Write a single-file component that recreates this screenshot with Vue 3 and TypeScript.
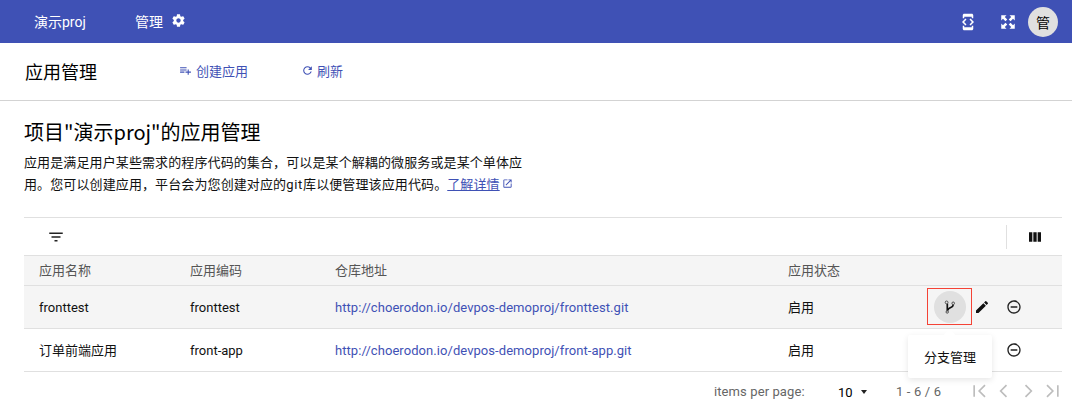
<script setup lang="ts">
interface Row { name: string; code: string; repo: string; status: string; latinName: boolean }
const rows: Row[] = [
  { name: 'fronttest', code: 'fronttest', repo: 'http://choerodon.io/devpos-demoproj/fronttest.git', status: '启用', latinName: true },
  { name: '订单前端应用', code: 'front-app', repo: 'http://choerodon.io/devpos-demoproj/front-app.git', status: '启用', latinName: false },
]
</script>

<template>
  <div class="page">
    <header class="topbar">
      <div class="top-left">
        <span class="proj">演示proj</span>
        <span class="manage">管理</span>
        <svg class="gear" viewBox="0 0 24 24" width="15" height="15"><path fill="#fff" d="M19.43 12.98c.04-.32.07-.64.07-.98s-.03-.66-.07-.98l2.11-1.65c.19-.15.24-.42.12-.64l-2-3.46c-.12-.22-.39-.3-.61-.22l-2.49 1c-.52-.4-1.08-.73-1.69-.98l-.38-2.65A.49.49 0 0 0 14 2h-4c-.25 0-.46.18-.49.42l-.38 2.65c-.61.25-1.17.59-1.69.98l-2.49-1c-.23-.09-.49 0-.61.22l-2 3.46c-.13.22-.07.49.12.64l2.11 1.65c-.04.32-.07.65-.07.98s.03.66.07.98l-2.11 1.65c-.19.15-.24.42-.12.64l2 3.46c.12.22.39.3.61.22l2.49-1c.52.4 1.08.73 1.69.98l.38 2.65c.03.24.24.42.49.42h4c.25 0 .46-.18.49-.42l.38-2.65c.61-.25 1.17-.59 1.69-.98l2.49 1c.23.09.49 0 .61-.22l2-3.46c.12-.22.07-.49-.12-.64l-2.11-1.65zM12 15.5c-1.93 0-3.5-1.57-3.5-3.5s1.57-3.5 3.5-3.5 3.5 1.57 3.5 3.5-1.57 3.5-3.5 3.5z"/></svg>
      </div>
      <div class="top-right">
        <svg viewBox="0 0 24 24" width="18" height="18"><path fill="#fff" d="M7 5h10v2h2V3c0-1.100-.9-1.990-2-1.990L7 1c-1.100 0-2 .9-2 2v4h2V5zm8.410 11.590L20 12l-4.590-4.590L14 8.830 17.170 12 14 15.170l1.410 1.420zM10 15.170L6.830 12 10 8.830 8.590 7.410 4 12l4.590 4.590L10 15.170zM17 19H7v-2H5v4c0 1.100.9 2 2 2h10c1.100 0 2-.9 2-2v-4h-2v2z"/></svg>
        <svg viewBox="0 0 24 24" width="18" height="18"><path fill="#fff" d="M3 3h7L7.700 5.300l3.300 3.300-2.400 2.400-3.300-3.300L3 10zM21 3v7l-2.300-2.300-3.300 3.300-2.400-2.400 3.300-3.300L14 3zM3 21v-7l2.300 2.300 3.300-3.300 2.400 2.400-3.300 3.300L10 21zM21 21h-7l2.300-2.300-3.300-3.300 2.400-2.400 3.300 3.300L21 14z"/></svg>
        <span class="avatar">管</span>
      </div>
    </header>

    <div class="subbar">
      <h1 class="sub-title">应用管理</h1>
      <button class="link-btn first">
        <svg viewBox="0 0 24 24" width="13" height="13"><path fill="#3f51b5" d="M14 10H2v2h12v-2zm0-4H2v2h12V6zm4 8v-4h-2v4h-4v2h4v4h2v-4h4v-2h-4zM2 16h8v-2H2v2z"/></svg>
        创建应用
      </button>
      <button class="link-btn">
        <svg viewBox="0 0 24 24" width="13" height="13"><path fill="#3f51b5" d="M17.650 6.350A7.958 7.958 0 0 0 12 4c-4.420 0-7.990 3.580-7.990 8s3.570 8 7.990 8c3.730 0 6.840-2.550 7.730-6h-2.080A5.990 5.990 0 0 1 12 18c-3.310 0-6-2.690-6-6s2.690-6 6-6c1.660 0 3.140.69 4.220 1.780L13 11h7V4l-2.350 2.350z"/></svg>
        刷新
      </button>
    </div>

    <main class="content">
      <h2 class="heading">项目"演示proj"的应用管理</h2>
      <p class="desc">应用是满足用户某些需求的程序代码的集合，可以是某个解耦的微服务或是某个单体应用。您可以创建应用，平台会为您创建对应的<span class="git">git</span>库以便管理该应用代码。<a class="more">了解详情</a><svg class="ext" viewBox="0 0 24 24" width="11" height="11"><path fill="#3f51b5" d="M19 19H5V5h7V3H5a2 2 0 0 0-2 2v14a2 2 0 0 0 2 2h14c1.100 0 2-.9 2-2v-7h-2v7zM14 3v2h3.590l-9.830 9.830 1.410 1.410L19 6.410V10h2V3h-7z"/></svg></p>

      <section class="table">
        <div class="tools">
          <svg class="filter" viewBox="0 0 24 24" width="18" height="18"><path fill="#222" d="M10 18h4v-2h-4v2zM3 6v2h18V6H3zm3 7h12v-2H6v2z"/></svg>
          <span class="tools-right">
            <svg viewBox="0 0 24 24" width="16" height="16"><path fill="#111" d="M3 5h5v14H3zM9.500 5h5v14h-5zM16 5h5v14h-5z"/></svg>
          </span>
        </div>
        <div class="tr thead">
          <span>应用名称</span><span>应用编码</span><span>仓库地址</span><span>应用状态</span><span></span>
        </div>
        <div v-for="(r, i) in rows" :key="r.repo" class="tr" :class="{ hovered: i === 0 }">
          <span :class="{ latin: r.latinName }">{{ r.name }}</span>
          <span class="latin">{{ r.code }}</span>
          <a class="repo latin">{{ r.repo }}</a>
          <span>{{ r.status }}</span>
          <span class="actions">
            <span class="slot">
              <span v-if="i === 0" class="branch-box">
                <span class="branch-btn">
                  <svg viewBox="0 0 14 14" width="14" height="14">
                    <path d="M4.300 3.500V11.500M10 4.500V5.500C10 7.800 4.800 7.200 4.800 10.500" fill="none" stroke="#111" stroke-width="1.700"/>
                    <circle cx="3.600" cy="2.400" r="1.400" fill="#e0e0e0" stroke="#444" stroke-width=".9"/>
                    <circle cx="4.200" cy="12" r="1.200" fill="#e0e0e0" stroke="#444" stroke-width=".9"/>
                    <circle cx="10.200" cy="3.300" r="1.300" fill="#e0e0e0" stroke="#444" stroke-width=".9"/>
                  </svg>
                </span>
              </span>
            </span>
            <span class="slot small">
              <svg v-if="i === 0" viewBox="0 0 24 24" width="16" height="16"><path fill="#111" d="M3 17.250V21h3.750L17.810 9.940l-3.750-3.750L3 17.250zM20.710 7.040a1 1 0 0 0 0-1.410l-2.340-2.340a1 1 0 0 0-1.410 0l-1.830 1.830 3.750 3.750 1.830-1.830z"/></svg>
            </span>
            <span class="slot small">
              <svg viewBox="0 0 24 24" width="16" height="16"><path fill="#222" d="M7 11v2h10v-2H7zm5-9C6.480 2 2 6.480 2 12s4.480 10 10 10 10-4.480 10-10S17.520 2 12 2zm0 18c-4.410 0-8-3.590-8-8s3.590-8 8-8 8 3.590 8 8-3.590 8-8 8z"/></svg>
            </span>
            <span v-if="i === 0" class="tooltip">分支管理</span>
          </span>
        </div>
        <footer class="pager">
          <span class="per">items per page:</span>
          <span class="size">10<i class="caret"></i></span>
          <span class="range">1 - 6 / 6</span>
          <span class="nav">
            <svg viewBox="0 0 24 24" width="20" height="20"><path d="M5 5v14M18 5l-7 7 7 7" /></svg>
            <svg viewBox="0 0 24 24" width="20" height="20"><path d="M15 5l-7 7 7 7" /></svg>
            <svg viewBox="0 0 24 24" width="20" height="20"><path d="M9 5l7 7-7 7" /></svg>
            <svg viewBox="0 0 24 24" width="20" height="20"><path d="M6 5l7 7-7 7M19 5v14" /></svg>
          </span>
        </footer>
      </section>
    </main>
  </div>
</template>

<style scoped>
.page {
  width: 1072px;
  height: 410px;
  overflow: hidden;
  background: #fff;
  color: #000;
  font-family: Roboto, "Noto Sans CJK SC", sans-serif;
  font-size: 13px;
}
.topbar {
  height: 43px;
  background: #3f51b5;
  display: flex;
  align-items: center;
  justify-content: space-between;
  color: #fff;
}
.top-left { display: flex; align-items: center; padding-left: 34px; padding-bottom: 2px; font-size: 14px; }
.proj { width: 101px; }
.manage { margin-right: 8px; }
.gear { display: block; }
.top-right { display: flex; align-items: center; gap: 22px; padding-right: 14px; }
.top-right svg { display: block; }
.avatar {
  width: 30px;
  height: 30px;
  margin-left: -11px;
  border-radius: 50%;
  background: #e0e0e0;
  color: #000;
  display: flex;
  align-items: center;
  justify-content: center;
  font-size: 14px;
}
.subbar {
  border-bottom: 1px solid #d3d3d3;
  display: flex;
  align-items: center;
  padding-left: 25px;
  padding-bottom: 2px;
  box-sizing: border-box;
  height: 58px;
}
.sub-title { margin: 0; font-size: 18px; font-weight: 400; width: 154px; }
.link-btn {
  border: 0;
  background: none;
  padding: 0;
  font: inherit;
  color: #3f51b5;
  display: flex;
  align-items: center;
  gap: 4px;
  width: 122px;
}
.link-btn + .link-btn { gap: 3px; }
.content { padding: 18px 10px 0 24px; }
.heading {
  margin: 0;
  font-family: "Noto Sans CJK SC", sans-serif;
  font-size: 20px;
  font-weight: 400;
  line-height: 26px;
}
.desc { margin: 7px 0 0; width: 508px; line-height: 22px; color: #111; letter-spacing: .11px; }
.git { letter-spacing: .7px; }
.more { color: #3f51b5; text-decoration: underline; }
.ext { margin-left: 2px; vertical-align: 0; }
.table { margin-top: 21px; }
.tools {
  height: 37px;
  border-top: 1px solid #e0e0e0;
  border-bottom: 1px solid #e0e0e0;
  display: flex;
  align-items: center;
  justify-content: space-between;
  padding-left: 23px;
}
.filter { display: block; }
.tools-right {
  display: flex;
  align-items: center;
  justify-content: center;
  width: 55px;
  height: 24px;
  border-left: 1px solid #e0e0e0;
}
.tr {
  display: grid;
  grid-template-columns: 151px 145px 453px 1fr 135px;
  align-items: center;
  height: 43px;
  box-sizing: border-box;
  border-bottom: 1px solid #e0e0e0;
  padding-left: 15px;
  padding-bottom: 2px;
  color: #111;
}
.thead { height: 30px; background: #f5f5f5; color: #555; }
.hovered { background: #f5f5f5; }
.latin { padding-top: 3px; }
.repo { color: #3f51b5; letter-spacing: .06px; }
.actions { position: relative; display: flex; align-items: center; padding-top: 1px; }
.slot { display: flex; align-items: center; justify-content: center; width: 45px; height: 36px; }
.slot.small { width: 20px; }
.slot.small + .slot.small { width: 32px; margin-left: 6px; }
.branch-box {
  box-sizing: border-box;
  width: 45px;
  height: 37px;
  border: 1px solid #f44336;
  display: flex;
  align-items: center;
  justify-content: center;
}
.branch-btn {
  width: 32px;
  height: 32px;
  border-radius: 50%;
  background: #e0e0e0;
  display: flex;
  align-items: center;
  justify-content: center;
}
.tooltip {
  position: absolute;
  left: -19px;
  top: 47px;
  z-index: 2;
  width: 84px;
  height: 43px;
  background: #fff;
  border-radius: 2px;
  box-shadow: 0 2px 6px rgba(0, 0, 0, .1);
  display: flex;
  align-items: center;
  justify-content: center;
  color: #111;
}
.tooltip::before {
  content: "";
  position: absolute;
  left: 37px;
  top: -4px;
  width: 9px;
  height: 9px;
  background: #fff;
  transform: rotate(45deg);
}
.pager {
  display: flex;
  align-items: center;
  height: 38px;
  color: #666;
  padding-left: 690px;
}
.per { width: 124px; letter-spacing: .1px; }
.size { display: flex; align-items: center; width: 58px; color: #000; padding-top: 2px; }
.caret {
  margin-left: 8px;
  border-left: 3.500px solid transparent;
  border-right: 3.500px solid transparent;
  border-top: 4px solid #222;
}
.range { width: 74px; letter-spacing: .15px; }
.nav { display: flex; gap: 4px; }
.nav svg { display: block; fill: none; stroke: #bdbdbd; stroke-width: 2; }
</style>
